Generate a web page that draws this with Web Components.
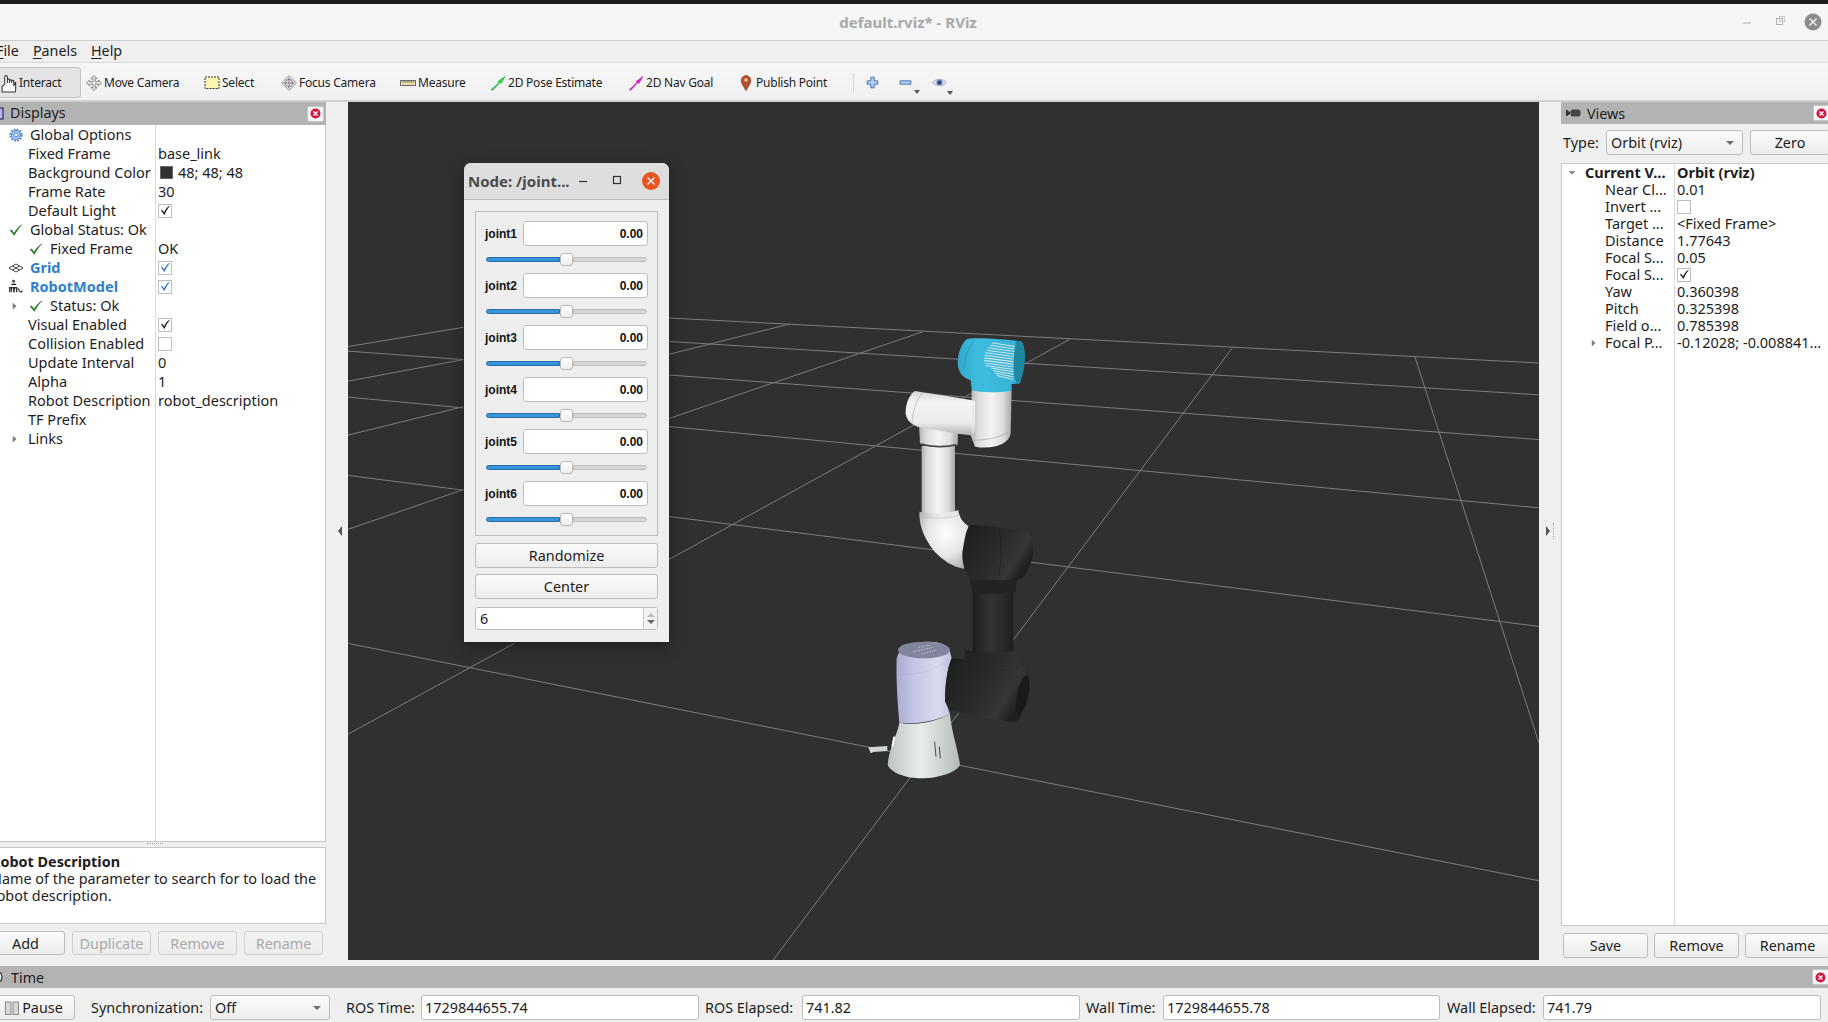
<!DOCTYPE html>
<html>
<head>
<meta charset="utf-8">
<title>RViz</title>
<style>
  html, body { margin: 0; height: 100%; overflow: hidden; background: #efefef; }
</style>
</head>
<body>
<rv-app>
  <rv-titlebar text="default.rviz* - RViz"></rv-titlebar>
  <rv-menubar></rv-menubar>
  <rv-toolbar></rv-toolbar>
  <rv-main>
    <rv-displays slot="left"></rv-displays>
    <rv-viewport slot="center"></rv-viewport>
    <rv-views slot="right"></rv-views>
  </rv-main>
  <rv-timepanel></rv-timepanel>
</rv-app>

<script>
const UI_FONT = `"Noto Sans", "Open Sans", sans-serif`;

const ICONS = {
  check: `<path d="M1 8.5 3 7.5 5.8 11C8 7.2 11 4 14.6 1.6L15 2.2C11.6 5.6 8.6 9.8 6.2 14.5Z" fill="#2c7d2c"/>`,
  tick: `<path d="M2.5 8 4 7 6.2 10.5C7.5 7.5 9.5 4.5 12.5 2.5L13 3C10.5 5.8 8.4 9.4 6.8 13.5Z" fill="currentColor"/>`,
  right: `<path d="M5 3.5 10 8 5 12.5Z" fill="#7a7a7a"/>`,
  down: `<path d="M3.5 5.5H12.5L8 10Z" fill="#7a7a7a"/>`,
  gear: `<circle cx="8" cy="8" r="5.2" fill="#a9c6ee" stroke="#4f86d0" stroke-width="1.2"/><circle cx="8" cy="8" r="6.6" fill="none" stroke="#4f86d0" stroke-width="2" stroke-dasharray="2 1.45"/><circle cx="8" cy="8" r="2.3" fill="#e8f0fb" stroke="#4f86d0"/>`,
  grid: `<path d="M1 8 8 4 15 8 8 12Z M4.5 6 11.5 10 M11.5 6 4.5 10" fill="none" stroke="#444" stroke-width="1"/>`,
  robot: `<circle cx="6" cy="2.4" r="1.5" fill="#444"/><rect x="3.6" y="5" width="5" height="1.4" fill="#222"/><path d="M1 14V8.5H10V14H8.5V10H7.4V14H5.4V10H4.2V14H2.6V10H2V14Z" fill="#333"/><path d="M10.5 10C12 11 12 14 14 14L15.5 12.5" fill="none" stroke="#333" stroke-width="1.2"/>`,
  hand: `<path d="M1 17V12L3.5 9.5V3C3.5 1 6 1 6 3V8.5V5.5C6 4.6 8 4.6 8 5.5V8.5V6C8 5.2 10 5.2 10 6V8.5V6.5C10 5.7 12 5.7 12 6.5V11L13.8 7.5V14.5C13.8 15.5 13.6 17 13.4 17Z" fill="#fff" stroke="#333" stroke-width="1"/>`,
  move: `<path d="M8 .5 11 3.5H9.2V6.8H12.5V5L15.5 8 12.5 11V9.2H9.2V12.5H11L8 15.5 5 12.5H6.8V9.2H3.5V11L.5 8 3.5 5V6.8H6.8V3.5H5Z" fill="#e6e6e6" stroke="#8a8a8a" stroke-width="1"/>`,
  select: `<rect x="1" y="2" width="14" height="11.5" fill="#fbf6b2" stroke="#333" stroke-width="1" stroke-dasharray="2 1"/>`,
  focus: `<path d="M8 .5 15.5 8 8 15.5.5 8Z" fill="#e8e8e8" stroke="#9a9a9a"/><circle cx="8" cy="8" r="3.6" fill="#f4f4f4" stroke="#777"/><path d="M8 2.5V13.5M2.5 8H13.5" stroke="#777" stroke-width="1"/>`,
  measure: `<rect x=".5" y="5.5" width="15" height="5" fill="#e6e0a8" stroke="#6b6b6b"/><path d="M3 6V8M5 6V8M7 6V8M9 6V8M11 6V8M13 6V8" stroke="#6b6b6b" stroke-width=".8"/>`,
  pose: `<path d="M1 15 9 7.5 8 6.5 15 1.5 11 8.5 10 7.5 3 15Z" fill="#12f03c" stroke="#1c7d2e" stroke-width=".5"/>`,
  nav: `<path d="M1 15 9 7.5 8 6.5 15 1.5 11 8.5 10 7.5 3 15Z" fill="#f018dc" stroke="#8d1d86" stroke-width=".5"/>`,
  pin: `<path d="M8 15.8C6 11.5 3.2 9 3.2 5.4A4.8 4.8 0 0 1 12.8 5.4C12.8 9 10 11.5 8 15.8Z" fill="#b4512b" stroke="#7a3a1e" stroke-width=".6"/><circle cx="8" cy="5" r="1.7" fill="#f3d9c4"/>`,
  plus: `<path d="M6 1.5H10V6H14.5V10H10V14.5H6V10H1.5V6H6Z" fill="#b9d2f0" stroke="#3f70b0" stroke-width="1.2"/>`,
  minus: `<rect x="1.5" y="6" width="13" height="4" fill="#b9d2f0" stroke="#3f70b0" stroke-width="1.2"/>`,
  eye: `<path d="M.5 8C3 3.8 13 3.8 15.5 8 13 12.2 3 12.2.5 8Z" fill="#dde3ee" stroke="#a9afba"/><circle cx="8" cy="8" r="3.2" fill="#5d7db5"/><circle cx="8" cy="8" r="1.4" fill="#1d2c55"/>`,
  monitor: `<rect x="1" y="2" width="12" height="11" fill="#b8b4f0" stroke="#34346a" stroke-width="1.3"/>`,
  camera: `<path d="M1 4.5 5 7V9L1 11.5Z" fill="#333"/><rect x="5.5" y="4.5" width="10" height="7" rx="2.5" fill="#444"/>`,
  clock: `<circle cx="6" cy="8" r="6" fill="#f4f4f4" stroke="#333" stroke-width="1.2"/>`,
  pause: `<rect x="1.5" y="2" width="5.5" height="12.5" fill="#d8d8d8" stroke="#8c8c8c"/><rect x="9" y="2" width="5.5" height="12.5" fill="#d8d8d8" stroke="#8c8c8c"/>`,
};

class RvIcon extends HTMLElement {
  constructor() {
    super();
    this.attachShadow({ mode: "open" });
  }

  connectedCallback() {
    const size = this.getAttribute("size") || 16;
    this.shadowRoot.innerHTML = `
      <style>
        :host { display: inline-flex; flex: none; }
        svg { display: block; overflow: visible; }
      </style>
      <svg width="${size}" height="${size}" viewBox="0 0 16 16">${ICONS[this.getAttribute("name")]}</svg>
    `;
  }
}

class RvButton extends HTMLElement {
  constructor() {
    super();
    this.attachShadow({ mode: "open" });
    this.shadowRoot.innerHTML = `
      <style>
        :host {
          display: flex;
          align-items: center;
          justify-content: center;
          gap: 2px;
          box-sizing: border-box;
          height: 25px;
          font-size: 14.4px;
          color: #1d1d1d;
          background: linear-gradient(180deg, #fbfbfb 0%, #ececec 100%);
          border: 1px solid #bdbdbd;
          border-radius: 3px;
        }
        :host([disabled]) { color: #a9a9a9; border-color: #d0d0d0; background: linear-gradient(180deg, #f3f3f3, #ececec); }
      </style>
      <slot></slot>
    `;
  }
}

class RvField extends HTMLElement {
  constructor() {
    super();
    this.attachShadow({ mode: "open" });
    this.shadowRoot.innerHTML = `
      <style>
        :host {
          display: flex;
          align-items: center;
          box-sizing: border-box;
          height: 25px;
          padding: 0 3px;
          font-size: 14.4px;
          color: #1d1d1d;
          background: #fff;
          border: 1px solid #bdbdbd;
          border-radius: 3px;
        }
      </style>
      <slot></slot>
    `;
  }
}

class RvCombo extends HTMLElement {
  constructor() {
    super();
    this.attachShadow({ mode: "open" });
    this.shadowRoot.innerHTML = `
      <style>
        :host {
          display: flex;
          align-items: center;
          justify-content: space-between;
          box-sizing: border-box;
          height: 25px;
          padding: 0 8px 0 4px;
          font-size: 14.4px;
          color: #1d1d1d;
          background: linear-gradient(180deg, #fbfbfb, #eeeeee);
          border: 1px solid #bdbdbd;
          border-radius: 3px;
        }
        i { border: 4px solid transparent; border-top: 4px solid #6e6e6e; border-bottom: 0; }
      </style>
      <slot></slot><i></i>
    `;
  }
}

class RvClose extends HTMLElement {
  constructor() {
    super();
    this.attachShadow({ mode: "open" });
    this.shadowRoot.innerHTML = `
      <style>
        :host {
          display: flex;
          align-items: center;
          justify-content: center;
          box-sizing: border-box;
          width: 17px;
          height: 16px;
          background: #f7f7f7;
          border: 1px solid #c6c6c6;
          border-radius: 2px;
        }
      </style>
      <svg width="11" height="11" viewBox="0 0 11 11">
        <circle cx="5.5" cy="5.5" r="5" fill="#d3173f"/>
        <path d="M3.5 3.5 7.5 7.5M7.5 3.5 3.5 7.5" stroke="#fff" stroke-width="1.4"/>
      </svg>
    `;
  }
}

class RvApp extends HTMLElement {
  constructor() {
    super();
    this.attachShadow({ mode: "open" });
    this.shadowRoot.innerHTML = `
      <style>
        :host {
          display: flex;
          flex-direction: column;
          width: 1828px;
          height: 1022px;
          overflow: hidden;
          background: #efefef;
          color: #1d1d1d;
          font-family: ${UI_FONT};
        }
      </style>
      <slot></slot>
    `;
  }
}

class RvTitlebar extends HTMLElement {
  constructor() {
    super();
    this.attachShadow({ mode: "open" });
    this.shadowRoot.innerHTML = `
      <style>
        :host {
          display: flex;
          align-items: center;
          justify-content: center;
          flex: none;
          position: relative;
          box-sizing: border-box;
          height: 41px;
          background: #f6f6f6;
          border-top: 4px solid #1c1c1c;
          border-bottom: 1px solid #cdcdcd;
        }
        .title { font-size: 15px; font-weight: 700; color: #a9a9a9; margin-left: -12px; }
        .ctl { position: absolute; top: 0; right: 7px; height: 100%; display: flex; align-items: center; }
        .ctl svg { display: block; overflow: visible; }
      </style>
      <div class="title"></div>
      <div class="ctl">
        <svg width="100" height="36" viewBox="0 0 100 36">
          <path d="M22 19H30" stroke="#b0b0b0" stroke-width="1"/>
          <rect x="55.5" y="14.5" width="6" height="6" fill="none" stroke="#b0b0b0"/>
          <rect x="58.5" y="12.5" width="5" height="5" fill="none" stroke="#c8c8c8"/>
          <circle cx="92" cy="18" r="8.5" fill="#8c8c8c"/>
          <path d="M88.5 14.5 95.5 21.5M95.5 14.5 88.5 21.5" stroke="#f4f4f4" stroke-width="1.4"/>
        </svg>
      </div>
    `;
    this.shadowRoot.querySelector(".title").textContent = this.getAttribute("text");
  }
}

class RvMenubar extends HTMLElement {
  constructor() {
    super();
    this.attachShadow({ mode: "open" });
    this.shadowRoot.innerHTML = `
      <style>
        :host {
          display: flex;
          align-items: center;
          flex: none;
          box-sizing: border-box;
          height: 22px;
          gap: 14px;
          margin-left: -4px;
          padding-bottom: 2px;
          font-size: 14.3px;
          background: #efefef;
          border-bottom: 1px solid #d6d6d6;
        }
        u { text-underline-offset: 2px; }
      </style>
      <span><u>F</u>ile</span><span><u>P</u>anels</span><span><u>H</u>elp</span>
    `;
  }
}

class RvTool extends HTMLElement {
  constructor() {
    super();
    this.attachShadow({ mode: "open" });
  }

  connectedCallback() {
    this.shadowRoot.innerHTML = `
      <style>
        :host {
          display: flex;
          align-items: center;
          flex: none;
          gap: 2px;
          box-sizing: border-box;
          width: ${this.getAttribute("w")}px;
          font-size: 12px;
          letter-spacing: -0.22px;
          white-space: nowrap;
        }
      </style>
      <rv-icon name="${this.getAttribute("icon")}"></rv-icon><slot></slot>
    `;
  }
}

class RvToolbar extends HTMLElement {
  constructor() {
    super();
    this.attachShadow({ mode: "open" });
    this.shadowRoot.innerHTML = `
      <style>
        :host {
          display: flex;
          align-items: center;
          flex: none;
          box-sizing: border-box;
          height: 39px;
          padding-top: 2px;
          background: linear-gradient(180deg, #f7f7f7, #f0f0f0);
          border-bottom: 2px solid #d0d0d0;
        }
        .active {
          display: flex;
          align-items: center;
          box-sizing: border-box;
          width: 88px;
          height: 31px;
          margin-left: -7px;
          margin-right: 5px;
          padding-left: 7px;
          gap: 1px;
          font-size: 12px;
          letter-spacing: -0.22px;
          background: #e4e4e4;
          border: 1px solid #c4c4c4;
          border-radius: 3px;
        }
        .sep { width: 1px; height: 19px; background: #d6d6d6; margin-right: 12px; }
        .act { position: relative; width: 33px; display: flex; }
        .act i { position: absolute; left: 15px; bottom: -5px; border: 3px solid transparent; border-top: 4px solid #555; border-bottom: 0; }
      </style>
      <div class="active"><rv-icon name="hand" size="17"></rv-icon>Interact</div>
      <rv-tool icon="move" w="118">Move Camera</rv-tool>
      <rv-tool icon="select" w="77">Select</rv-tool>
      <rv-tool icon="focus" w="119">Focus Camera</rv-tool>
      <rv-tool icon="measure" w="90">Measure</rv-tool>
      <rv-tool icon="pose" w="138">2D Pose Estimate</rv-tool>
      <rv-tool icon="nav" w="110">2D Nav Goal</rv-tool>
      <rv-tool icon="pin" w="115">Publish Point</rv-tool>
      <div class="sep"></div>
      <div class="act"><rv-icon name="plus" size="13"></rv-icon></div>
      <div class="act"><rv-icon name="minus" size="13"></rv-icon><i></i></div>
      <div class="act"><rv-icon name="eye" size="15"></rv-icon><i></i></div>
    `;
  }
}

class RvMain extends HTMLElement {
  constructor() {
    super();
    this.attachShadow({ mode: "open" });
    this.shadowRoot.innerHTML = `
      <style>
        :host {
          display: grid;
          grid-template-columns: 326px 22px 1191px 22px 267px;
          flex: none;
          height: 858px;
        }
        .gutter { display: flex; align-items: center; justify-content: center; }
        .gutter i { border: 5px solid transparent; }
        .l { padding-left: 6px; }
        .r { padding-right: 6px; gap: 3px; }
        .l i { border-right: 4px solid #555; border-left: 0; }
        .r i { border-left: 4px solid #555; border-right: 0; }
        .r b { height: 16px; border-left: 1px dotted #aaa; margin-right: -6px; }
      </style>
      <slot name="left"></slot>
      <div class="gutter l"><i></i></div>
      <slot name="center"></slot>
      <div class="gutter r"><i></i><b></b></div>
      <slot name="right"></slot>
    `;
  }
}

class RvDock extends HTMLElement {
  constructor() {
    super();
    this.attachShadow({ mode: "open" });
    this.shadowRoot.innerHTML = `
      <style>
        :host {
          display: flex;
          flex-direction: column;
          min-width: 0;
          min-height: 0;
        }
        .bar {
          display: flex;
          align-items: center;
          flex: none;
          box-sizing: border-box;
          height: var(--bar-h, 23px);
          gap: 6px;
          padding-left: var(--bar-pad, 0);
          font-size: 14.3px;
          background: #b3b3b3;
        }
        .name { flex: 1; padding-bottom: var(--name-lift, 0); }
        rv-close { margin-right: var(--close-right, 2px); }
      </style>
      <div class="bar">
        <slot name="icon"></slot>
        <span class="name"></span>
        <rv-close></rv-close>
      </div>
      <slot></slot>
    `;
  }

  connectedCallback() {
    this.shadowRoot.querySelector(".name").textContent = this.getAttribute("text");
  }
}

class RvTree extends HTMLElement {
  constructor() {
    super();
    this.attachShadow({ mode: "open" });
    this.shadowRoot.innerHTML = `
      <style>
        :host {
          display: block;
          box-sizing: border-box;
          background:
            linear-gradient(#d9d9d9, #d9d9d9) no-repeat var(--split) 0 / 1px 100%,
            #fff;
          border: 1px solid #c8c8c8;
          border-width: var(--tree-border, 0 1px 1px 0);
        }
      </style>
      <slot></slot>
    `;
  }
}

class RvProp extends HTMLElement {
  constructor() {
    super();
    this.attachShadow({ mode: "open" });
  }

  connectedCallback() {
    const pad = this.getAttribute("pad") || 0;
    const check = this.getAttribute("check");
    const tick = check === "off" ? "" : `<rv-icon name="tick" size="13" style="color:${check === "blue" ? "#2a6ebd" : "#111"}"></rv-icon>`;
    this.shadowRoot.innerHTML = `
      <style>
        :host {
          display: grid;
          grid-template-columns: var(--split) 1fr;
          height: var(--row-h);
          line-height: var(--row-h);
          font-size: 14.5px;
          white-space: nowrap;
        }
        :host([head]) { font-weight: 700; }
        :host([link]) .name { font-weight: 700; color: #2f7fd0; }
        .name { display: flex; align-items: center; padding-left: ${pad}px; }
        .val { display: flex; align-items: center; padding-left: 3px; gap: 5px; overflow: hidden; }
        .box {
          display: flex;
          align-items: center;
          justify-content: center;
          box-sizing: border-box;
          width: 14px;
          height: 14px;
          background: #fff;
          border: 1px solid #bdbdbd;
        }
        .swatch { width: 13px; height: 13px; background: #303030; margin-left: 2px; border: 1px solid #666; box-sizing: border-box; }
      </style>
      <div class="name"><slot name="icon"></slot><span class="txt"></span></div>
      <div class="val">${this.hasAttribute("swatch") ? `<span class="swatch"></span>` : ""}${check ? `<span class="box">${tick}</span>` : `<span class="v"></span>`}</div>
    `;
    this.shadowRoot.querySelector(".txt").textContent = this.getAttribute("label");
    if (!check) this.shadowRoot.querySelector(".v").textContent = this.getAttribute("value") || "";
  }
}

class RvDisplays extends HTMLElement {
  constructor() {
    super();
    this.attachShadow({ mode: "open" });
    this.shadowRoot.innerHTML = `
      <style>
        :host { display: block; --split: 155px; --row-h: 19px; --name-lift: 2px; }
        rv-dock { height: 100%; }
        rv-tree { height: 717px; width: 326px; flex: none; }
        .mon { margin-left: -10px; margin-right: -2px; }
        .dots { flex: none; box-sizing: border-box; width: 16px; height: 5px; margin-left: 147px; padding-top: 1px; }
        .dots::before { content: ""; display: block; border-top: 1px dotted #aaa; }
        .hint {
          box-sizing: border-box;
          height: 77px;
          padding: 5px 0 0;
          font-size: 14.4px;
          line-height: 17px;
          background: #fff;
          border: 1px solid #c8c8c8;
          border-left: 0;
          text-indent: -9px;
          white-space: nowrap;
          overflow: hidden;
        }
        .hint b, .hint span { display: block; }
        .btns { display: flex; gap: 7px; margin-top: 7px; }
        .btns rv-button { width: 79px; height: 24px; }
        .btns .add { margin-left: -14px; }
      </style>
      <rv-dock text="Displays">
        <rv-icon slot="icon" class="mon" name="monitor"></rv-icon>
        <rv-tree>
          <rv-prop label="Global Options" pad="9"><rv-icon slot="icon" name="gear" size="14" style="margin-right:7px"></rv-icon></rv-prop>
          <rv-prop label="Fixed Frame" pad="28" value="base_link"></rv-prop>
          <rv-prop label="Background Color" pad="28" swatch value="48; 48; 48"></rv-prop>
          <rv-prop label="Frame Rate" pad="28" value="30"></rv-prop>
          <rv-prop label="Default Light" pad="28" check="on"></rv-prop>
          <rv-prop label="Global Status: Ok" pad="9"><rv-icon slot="icon" name="check" size="14" style="margin-right:7px"></rv-icon></rv-prop>
          <rv-prop label="Fixed Frame" pad="29" value="OK"><rv-icon slot="icon" name="check" size="14" style="margin-right:7px"></rv-icon></rv-prop>
          <rv-prop label="Grid" pad="8" link check="blue"><rv-icon slot="icon" name="grid" size="16" style="margin-right:6px"></rv-icon></rv-prop>
          <rv-prop label="RobotModel" pad="8" link check="blue"><rv-icon slot="icon" name="robot" size="15" style="margin-right:7px"></rv-icon></rv-prop>
          <rv-prop label="Status: Ok" pad="9"><rv-icon slot="icon" name="right" size="12" style="margin-right:8px"></rv-icon><rv-icon slot="icon" name="check" size="14" style="margin-right:7px"></rv-icon></rv-prop>
          <rv-prop label="Visual Enabled" pad="28" check="on"></rv-prop>
          <rv-prop label="Collision Enabled" pad="28" check="off"></rv-prop>
          <rv-prop label="Update Interval" pad="28" value="0"></rv-prop>
          <rv-prop label="Alpha" pad="28" value="1"></rv-prop>
          <rv-prop label="Robot Description" pad="28" value="robot_description"></rv-prop>
          <rv-prop label="TF Prefix" pad="28"></rv-prop>
          <rv-prop label="Links" pad="9"><rv-icon slot="icon" name="right" size="12" style="margin-right:7px"></rv-icon></rv-prop>
        </rv-tree>
        <div class="dots"></div>
        <div class="hint"><b>Robot Description</b><span>Name of the parameter to search for to load the</span><span>robot description.</span></div>
        <div class="btns">
          <rv-button class="add">Add</rv-button>
          <rv-button disabled>Duplicate</rv-button>
          <rv-button disabled>Remove</rv-button>
          <rv-button disabled>Rename</rv-button>
        </div>
      </rv-dock>
    `;
  }
}

class RvViews extends HTMLElement {
  constructor() {
    super();
    this.attachShadow({ mode: "open" });
    this.shadowRoot.innerHTML = `
      <style>
        :host { display: block; min-width: 0; overflow: hidden; --split: 112px; --row-h: 17px; --close-right: -2px; --bar-h: 22px; --bar-pad: 4px; }
        rv-dock { height: 100%; }
        .type { display: flex; align-items: center; gap: 7px; height: 25px; margin: 6px 0 8px; padding-left: 2px; font-size: 14.4px; }
        .type span { width: 36px; flex: none; }
        .type rv-combo { width: 137px; flex: none; }
        .type rv-button { width: 80px; flex: none; }
        rv-tree { height: 763px; --tree-border: 1px 0 1px 1px; }
        .btns { display: flex; gap: 6px; margin: 7px -2px 0 2px; }
        .btns rv-button { flex: 1; }
      </style>
      <rv-dock text="Views">
        <rv-icon slot="icon" name="camera"></rv-icon>
        <div class="type"><span>Type:</span><rv-combo>Orbit (rviz)</rv-combo><rv-button>Zero</rv-button></div>
        <rv-tree>
          <rv-prop label="Current V..." head pad="4" value="Orbit (rviz)"><rv-icon slot="icon" name="down" size="12" style="margin-right:7px"></rv-icon></rv-prop>
          <rv-prop label="Near Cl..." pad="43" value="0.01"></rv-prop>
          <rv-prop label="Invert ..." pad="43" check="off"></rv-prop>
          <rv-prop label="Target ..." pad="43" value="<Fixed Frame>"></rv-prop>
          <rv-prop label="Distance" pad="43" value="1.77643"></rv-prop>
          <rv-prop label="Focal S..." pad="43" value="0.05"></rv-prop>
          <rv-prop label="Focal S..." pad="43" check="on"></rv-prop>
          <rv-prop label="Yaw" pad="43" value="0.360398"></rv-prop>
          <rv-prop label="Pitch" pad="43" value="0.325398"></rv-prop>
          <rv-prop label="Field o..." pad="43" value="0.785398"></rv-prop>
          <rv-prop label="Focal P..." pad="26" value="-0.12028; -0.008841..."><rv-icon slot="icon" name="right" size="12" style="margin-right:5px"></rv-icon></rv-prop>
        </rv-tree>
        <div class="btns"><rv-button>Save</rv-button><rv-button>Remove</rv-button><rv-button>Rename</rv-button></div>
      </rv-dock>
    `;
  }
}

class RvTimepanel extends HTMLElement {
  constructor() {
    super();
    this.attachShadow({ mode: "open" });
    this.shadowRoot.innerHTML = `
      <style>
        :host { display: block; flex: none; margin-top: 6px; --bar-h: 22px; --close-right: -1px; font-size: 14.4px; }
        .row { display: flex; align-items: center; height: 25px; margin-top: 7px; white-space: nowrap; }
        .row rv-button { width: 83px; margin-left: -8px; margin-right: 16px; }
        .row span { flex: none; }
        .row rv-combo { width: 120px; margin-right: 16px; flex: none; }
        .row rv-field { flex: none; }
        .clock { margin-left: -10px; margin-right: -1px; }
      </style>
      <rv-dock text="Time">
        <rv-icon slot="icon" class="clock" name="clock"></rv-icon>
        <div class="row">
          <rv-button><rv-icon name="pause"></rv-icon>Pause</rv-button>
          <span style="width:119px">Synchronization:</span><rv-combo>Off</rv-combo>
          <span style="width:75px">ROS Time:</span><rv-field style="width:278px;margin-right:6px">1729844655.74</rv-field>
          <span style="width:97px">ROS Elapsed:</span><rv-field style="width:278px;margin-right:6px">741.82</rv-field>
          <span style="width:77px">Wall Time:</span><rv-field style="width:277px;margin-right:7px">1729844655.78</rv-field>
          <span style="width:96px">Wall Elapsed:</span><rv-field style="width:278px">741.79</rv-field>
        </div>
      </rv-dock>
    `;
  }
}

class RvJoint extends HTMLElement {
  constructor() {
    super();
    this.attachShadow({ mode: "open" });
  }

  connectedCallback() {
    this.shadowRoot.innerHTML = `
      <style>
        :host { display: block; font-family: "Liberation Sans", Arial, sans-serif; font-size: 12px; font-weight: 700; color: #111; }
        .top { display: flex; align-items: center; height: 25px; }
        .lbl { width: 38px; }
        .num {
          box-sizing: border-box;
          width: 125px;
          height: 25px;
          line-height: 24px;
          padding-right: 4px;
          text-align: right;
          background: #fff;
          border: 1px solid #bdbdbd;
          border-radius: 3px;
        }
        .slider { display: flex; align-items: center; height: 12px; margin: 7px 0 8px 1px; width: 161px; }
        .fill { width: 74px; height: 5px; background: #3596dc; border: 1px solid #2a6ea6; box-sizing: border-box; border-radius: 3px 0 0 3px; }
        .knob { width: 13px; height: 13px; box-sizing: border-box; background: linear-gradient(#fff, #eee); border: 1px solid #b9b9b9; border-radius: 3px; flex: none; }
        .rest { flex: 1; height: 5px; background: #d6d6d6; border: 1px solid #bcbcbc; box-sizing: border-box; border-radius: 0 3px 3px 0; }
      </style>
      <div class="top"><span class="lbl">${this.getAttribute("name")}</span><div class="num">0.00</div></div>
      <div class="slider"><div class="fill"></div><div class="knob"></div><div class="rest"></div></div>
    `;
  }
}

class RvJointDialog extends HTMLElement {
  constructor() {
    super();
    this.attachShadow({ mode: "open" });
    this.shadowRoot.innerHTML = `
      <style>
        :host {
          display: block;
          position: absolute;
          left: 116px;
          top: 61px;
          width: 205px;
          height: 479px;
          background: #eeeeee;
          border-radius: 7px 7px 0 0;
          box-shadow: 0 4px 16px rgba(0,0,0,0.35);
          font-family: ${UI_FONT};
        }
        .head {
          display: flex;
          align-items: center;
          box-sizing: border-box;
          height: 37px;
          padding-left: 4px;
          background: #dedede;
          border-bottom: 1px solid #bbb;
          border-radius: 7px 7px 0 0;
          font-size: 15px;
          font-weight: 700;
          color: #4b4b4b;
          white-space: nowrap;
        }
        .head .t { width: 110px; }
        .head svg { display: block; }
        .body { display: flex; flex-direction: column; padding: 11px 11px 0; gap: 6px; }
        .group { box-sizing: border-box; height: 325px; padding: 9px 9px 0; border: 1px solid #bdbdbd; margin-bottom: 1px; }
        .spin { display: flex; height: 23px; margin-top: 2px; background: #fff; border: 1px solid #bdbdbd; border-radius: 3px; font-size: 14.4px; line-height: 23px; box-sizing: border-box; }
        .spin span { flex: 1; padding-left: 4px; line-height: 22px; }
        .spin div { display: flex; flex-direction: column; align-items: center; justify-content: center; gap: 3px; width: 13px; border-left: 1px solid #c8c8c8; background: #f2f2f2; }
        .up { border: 4px solid transparent; border-bottom: 4px solid #bbb; border-top: 0; }
        .dn { border: 4px solid transparent; border-top: 4px solid #666; border-bottom: 0; }
      </style>
      <div class="head">
        <span class="t">Node: /joint...</span>
        <svg width="86" height="36" viewBox="0 0 86 36">
          <path d="M1 18.5H9" stroke="#333" stroke-width="1.2"/>
          <rect x="35.5" y="13.5" width="7" height="7" fill="none" stroke="#333" stroke-width="1.2"/>
          <circle cx="73" cy="18" r="9" fill="#e95420"/>
          <path d="M69.5 14.5 76.5 21.5M76.5 14.5 69.5 21.5" stroke="#fff" stroke-width="1.4"/>
        </svg>
      </div>
      <div class="body">
        <div class="group">
          <rv-joint name="joint1"></rv-joint>
          <rv-joint name="joint2"></rv-joint>
          <rv-joint name="joint3"></rv-joint>
          <rv-joint name="joint4"></rv-joint>
          <rv-joint name="joint5"></rv-joint>
          <rv-joint name="joint6"></rv-joint>
        </div>
        <rv-button>Randomize</rv-button>
        <rv-button>Center</rv-button>
        <div class="spin"><span>6</span><div><i class="up"></i><i class="dn"></i></div></div>
      </div>
    `;
  }
}

// grid lines in page coordinates, the svg viewBox is the viewport box on the page
const GRID_LINES = [
  [348, 346.6, 463.4, 327.3], [348, 351.1, 463.4, 359.6], [348, 381.2, 463.4, 359.6],
  [348, 397.1, 463.4, 407.9], [348, 435.1, 463.4, 406.7], [348, 475.4, 463.4, 490.2],
  [348, 529.3, 463.4, 489.6], [348, 643.4, 1538.8, 880.7], [348, 734.2, 514.3, 643.4],
  [669, 318, 1538.8, 363], [669, 341.5, 1538.8, 394.8], [669, 375, 1538.8, 439.6],
  [669, 426.6, 1538.8, 507.8], [669, 516.5, 1538.8, 626.4], [773.2, 960, 1232, 348.3],
  [1414.9, 356.8, 1538.8, 742.7], [669, 354.3, 789.7, 324], [669, 418.5, 923, 331.7],
  [668, 560, 1069.7, 339.3],
];

class RvViewport extends HTMLElement {
  constructor() {
    super();
    this.attachShadow({ mode: "open" });
    const lines = GRID_LINES.map(([x1, y1, x2, y2]) => `M${x1} ${y1}L${x2} ${y2}`).join("");
    // the ribbed stripes on the wrist cap
    let comb = "";
    for (let i = 0; i < 14; i++) {
      const y = 68 + i * 7.6;
      const left = 396 - Math.sin(i / 13 * Math.PI) * 24 + (i > 9 ? 14 : 0);
      comb += `M${left} ${y}L${470 - i * 0.8} ${y + 12}`;
    }
    this.shadowRoot.innerHTML = `
      <style>
        :host { display: block; position: relative; width: 1191px; height: 858px; background: #303030; overflow: hidden; }
        svg { display: block; }
      </style>
      <svg width="1191" height="858" viewBox="348 102 1191 858">
        <defs>
          <linearGradient id="whiteH" x1="0" x2="1" y1="0" y2="0">
            <stop offset="0" stop-color="#b2b2b2"/><stop offset=".18" stop-color="#dddddd"/>
            <stop offset=".5" stop-color="#f4f4f4"/><stop offset=".8" stop-color="#dcdcdc"/>
            <stop offset="1" stop-color="#a8a8a8"/>
          </linearGradient>
          <linearGradient id="whiteV" x1="0" x2="0" y1="0" y2="1">
            <stop offset="0" stop-color="#d4d4d4"/><stop offset=".25" stop-color="#f4f4f4"/>
            <stop offset=".7" stop-color="#ececec"/><stop offset="1" stop-color="#b4b4b4"/>
          </linearGradient>
          <radialGradient id="elbow" cx=".55" cy=".4" r=".7">
            <stop offset="0" stop-color="#ffffff"/><stop offset=".55" stop-color="#e6e6e6"/><stop offset="1" stop-color="#a5a5a5"/>
          </radialGradient>
          <linearGradient id="darkH" x1="0" x2="1" y1="0" y2="0">
            <stop offset="0" stop-color="#1e1e1e"/><stop offset=".45" stop-color="#343434"/><stop offset="1" stop-color="#1f1f1f"/>
          </linearGradient>
          <linearGradient id="darkE" x1="0" x2="1" y1="0" y2=".5">
            <stop offset="0" stop-color="#1c1c1c"/><stop offset=".6" stop-color="#2c2c2c"/><stop offset=".85" stop-color="#363636"/><stop offset="1" stop-color="#202020"/>
          </linearGradient>
          <linearGradient id="lav" x1="0" x2="1" y1="0" y2="0">
            <stop offset="0" stop-color="#a9acd0"/><stop offset=".3" stop-color="#c2c5e4"/>
            <stop offset=".75" stop-color="#d9dbef"/><stop offset="1" stop-color="#bfc2de"/>
          </linearGradient>
          <linearGradient id="base" x1="0" x2="1" y1="0" y2="0">
            <stop offset="0" stop-color="#bcc3bf"/><stop offset=".45" stop-color="#e8eeec"/>
            <stop offset="1" stop-color="#b4bbb7"/>
          </linearGradient>
          <linearGradient id="cyan" x1="0" x2="1" y1="0" y2="0">
            <stop offset="0" stop-color="#2fa9cc"/><stop offset=".3" stop-color="#3dbde0"/><stop offset="1" stop-color="#35b2d6"/>
          </linearGradient>
          <filter id="soft" x="-30%" y="-30%" width="160%" height="160%"><feGaussianBlur stdDeviation="7"/></filter>
        </defs>
        <path d="${lines}" fill="none" stroke="#7d7d7d" stroke-width="1"/>

        <g transform="translate(860 320) scale(.33333)">
          <!-- forearm -->
          <rect x="185" y="378" width="100" height="205" fill="url(#whiteH)"/>
          <path d="M178 575C215 582 260 582 295 570C298 590 305 605 325 618L312 746C270 740 225 705 205 668C185 635 178 610 178 575Z" fill="url(#elbow)"/>
          <path d="M180 590C215 596 260 596 294 586" fill="none" stroke="#bcbcbc" stroke-width="2"/>
          <!-- shoulder -->
          <path d="M177 310L295 310 293 374C260 382 205 382 180 370Z" fill="url(#whiteH)"/>
          <path d="M183 372C215 382 260 382 288 374" fill="none" stroke="#4a4a4a" stroke-width="5"/>
          <path d="M335 210L455 212 452 340C448 372 400 390 345 380L332 346Z" fill="url(#whiteH)"/>
          <path d="M165 213C220 222 290 232 345 242L345 347 300 342C250 335 200 325 177 322C150 312 135 295 137 272C139 245 150 222 165 213Z" fill="url(#whiteV)"/>
          <path d="M338 250 340 340" fill="none" stroke="#e4e4e4" stroke-width="22" filter="url(#soft)"/>
          <path d="M332 360C370 362 410 355 445 338" fill="none" stroke="#8a8a8a" stroke-width="1.5"/>
          <path d="M188 215C170 240 158 270 156 310" fill="none" stroke="#9a9a9a" stroke-width="1.5"/>
          <!-- head -->
          <path d="M320 58C340 50 460 60 485 65C497 80 497 130 480 190L455 192 455 212C400 220 360 217 335 210L332 180C310 175 295 160 293 130C293 100 305 70 320 58Z" fill="url(#cyan)"/>
          <path d="${comb}" fill="none" stroke="#cfe2e6" stroke-width="3.2"/>
          <path d="M482 64C500 82 500 140 478 192C458 190 456 130 468 63Z" fill="#1f879f"/>
          <path d="M345 58C325 80 315 110 312 150" fill="none" stroke="#1f7f9a" stroke-width="1.5"/>
          <!-- dark elbow -->
          <path d="M330 615C400 615 480 630 505 640C525 660 522 720 505 745C495 770 480 782 462 786L338 786C315 760 300 720 310 680C315 650 320 625 330 615Z" fill="url(#darkE)"/>
          <path d="M418 630C425 670 425 720 415 770" fill="none" stroke="#1b1b1b" stroke-width="1.5"/>
        </g>

        <g transform="translate(850 570) scale(.33333)">
          <!-- base and lower link -->
          <path d="M55 532L112 528 112 543 70 546 62 550Z" fill="#d4d4d4"/>
          <path d="M148 458C190 468 250 458 300 432C305 490 325 540 330 585C320 605 270 625 215 625C170 625 125 610 113 585C118 530 140 500 148 458Z" fill="url(#base)"/>
          <path d="M254 515 258 560M268 530 271 565" stroke="#4a4a4a" stroke-width="3"/>
          <path d="M133 500 127 530" stroke="#fff" stroke-width="6"/>
          <path d="M140 265C150 225 200 215 235 215C270 215 298 225 300 245L305 265C290 300 285 350 287 395L300 432C250 455 190 465 148 458C142 390 138 320 140 265Z" fill="url(#lav)"/>
          <ellipse cx="222" cy="240" rx="78" ry="25" fill="#83859e"/>
          <path d="M190 245 250 232M205 232 240 226M215 252 260 240" stroke="#d4d6e4" stroke-width="2" stroke-dasharray="5 3"/>
          <path d="M142 312C190 320 260 300 300 265" fill="none" stroke="#9ea0bd" stroke-width="1.5" stroke-dasharray="3 3"/>
          <!-- dark link -->
          <rect x="368" y="40" width="122" height="210" fill="url(#darkH)"/>
          <path d="M358 30L500 30 497 66C450 76 400 74 368 66Z" fill="#232323"/>
          <path d="M305 265L345 268 345 240C390 250 470 250 508 238L510 292 535 300C545 330 535 390 515 430C510 450 500 458 480 455C420 447 340 435 300 420L285 395C285 350 290 300 305 265Z" fill="url(#darkE)"/>
          <path d="M345 275C390 300 470 310 510 292" fill="none" stroke="#1c1c1c" stroke-width="1.5" stroke-dasharray="3 3"/>
          <ellipse cx="518" cy="375" rx="17" ry="58" transform="rotate(12 518 375)" fill="#1a1a1a"/>
        </g>
      </svg>
      <rv-joint-dialog></rv-joint-dialog>
    `;
  }
}

customElements.define("rv-icon", RvIcon);
customElements.define("rv-button", RvButton);
customElements.define("rv-field", RvField);
customElements.define("rv-combo", RvCombo);
customElements.define("rv-close", RvClose);
customElements.define("rv-tool", RvTool);
customElements.define("rv-dock", RvDock);
customElements.define("rv-tree", RvTree);
customElements.define("rv-prop", RvProp);
customElements.define("rv-joint", RvJoint);
customElements.define("rv-joint-dialog", RvJointDialog);
customElements.define("rv-titlebar", RvTitlebar);
customElements.define("rv-menubar", RvMenubar);
customElements.define("rv-toolbar", RvToolbar);
customElements.define("rv-main", RvMain);
customElements.define("rv-displays", RvDisplays);
customElements.define("rv-views", RvViews);
customElements.define("rv-viewport", RvViewport);
customElements.define("rv-timepanel", RvTimepanel);
customElements.define("rv-app", RvApp);
</script>
</body>
</html>
